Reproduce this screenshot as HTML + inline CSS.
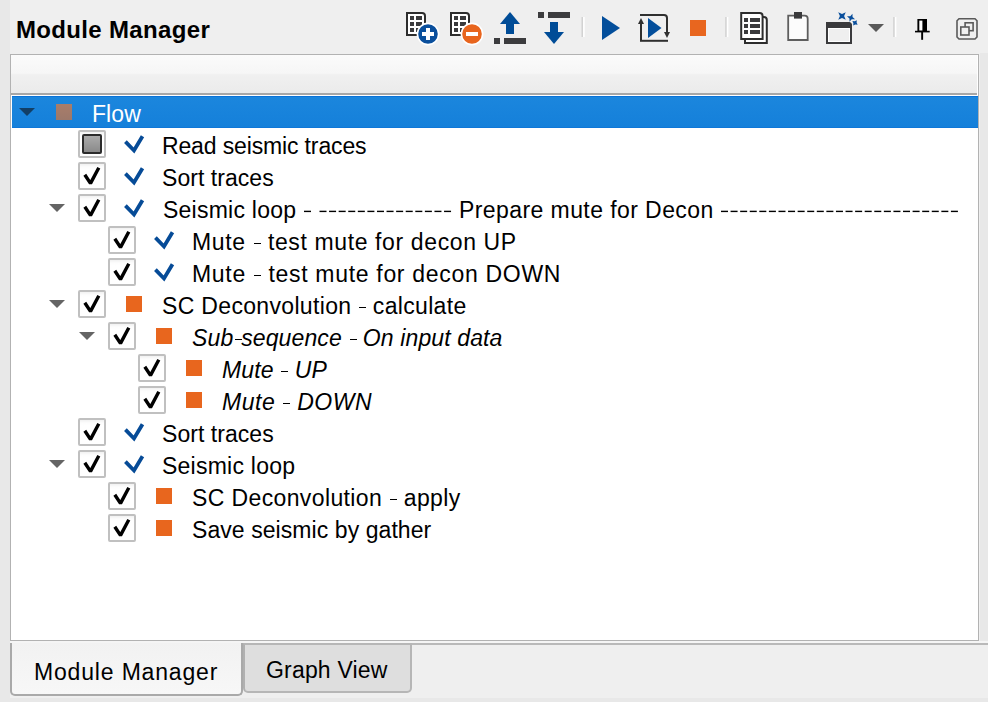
<!DOCTYPE html>
<html><head><meta charset="utf-8">
<style>
html,body{margin:0;padding:0;}
body{width:988px;height:702px;position:relative;overflow:hidden;background:#e8e8e8;font-family:"Liberation Sans",sans-serif;}
.abs{position:absolute;}
#main{position:absolute;left:10px;top:0;width:978px;height:698px;background:#efefef;}
#rstrip{position:absolute;left:980px;top:53px;width:8px;height:588px;background:#e8e8e8;}
#title{position:absolute;left:16px;top:14px;font-size:24px;font-weight:bold;line-height:32px;letter-spacing:0.34px;color:#000;white-space:pre;}
#panel{position:absolute;left:10px;top:54px;width:967px;height:585px;border:1px solid #b2b2b2;background:#fff;}
#hdr{position:absolute;left:11px;top:55px;width:966px;height:38px;background:linear-gradient(#fbfbfb 0,#f6f6f6 48%,#f0f0f0 52%,#ebebeb 100%);border-bottom:2px solid #a7a7a7;}
#sel{position:absolute;left:12px;top:96px;width:966px;height:30px;background:linear-gradient(#1b86dd,#1580da);border-top:1px solid #0b73d8;border-bottom:1px solid #0f77d8;}
.cb{position:absolute;width:24px;height:24px;border:2px solid #c0c0c0;border-radius:2px;background:linear-gradient(#f1f1f1 0,#fdfdfd 3px,#fff 6px);}
.cbp{position:absolute;width:16px;height:16px;border:2px solid #2c2c2c;border-radius:2px;background:linear-gradient(#aaaaaa,#8a8a8a);}
.sq{position:absolute;width:16px;height:16px;background:#e8661e;}
.tx{position:absolute;font-size:23px;line-height:32px;color:#000;white-space:pre;}
.it{font-style:italic;}
.hy{position:relative;color:transparent;}
.hy::after{content:"";position:absolute;left:1.2px;width:7px;height:1.4px;top:14.1px;background:#000;}
.dash{position:absolute;height:2px;background:repeating-linear-gradient(90deg,#000 0,#000 7px,transparent 7px,transparent 9.58px);}
#tabline{position:absolute;left:10px;top:643px;width:978px;height:2px;background:#b9b9b9;}
#tabhl{position:absolute;left:10px;top:641px;width:978px;height:2px;background:#f5f5f5;}
#tab1{position:absolute;left:10px;top:643px;width:229px;height:51px;border:2px solid #a9a9a9;border-top:none;border-radius:0 0 5px 5px;background:linear-gradient(#f2f2f2,#f7f7f7);}
#tab2{position:absolute;left:243px;top:643px;width:165px;height:46px;border:2px solid #b6b6b6;border-left:2px solid #b0b0b0;border-radius:0 0 5px 5px;background:#dedede;}
svg{position:absolute;left:0;top:0;}
</style></head>
<body>
<div id="main"></div>
<div id="rstrip"></div>
<div id="title">Module Manager</div>

<svg width="988" height="54" viewBox="0 0 988 54" style="top:0">
 <!-- add module -->
 <path d="M407 35 V13 H422 Q425 13 425 16 V35 Z" fill="#fff" stroke="#2d2d2d" stroke-width="2"/>
 <g fill="#3a3a3c">
  <rect x="410" y="16" width="4" height="4"/><rect x="416" y="16" width="6" height="4"/>
  <rect x="410" y="22" width="4" height="4"/><rect x="416" y="22" width="6" height="4"/>
  <rect x="410" y="28" width="4" height="4"/><rect x="416" y="28" width="6" height="4"/>
 </g>
 <circle cx="428" cy="34" r="10.6" fill="#0a4f9c" stroke="#fff" stroke-width="1.6"/>
 <rect x="422" y="32" width="12" height="4" fill="#fff"/><rect x="426" y="28" width="4" height="12" fill="#fff"/>
 <!-- remove module -->
 <path d="M451 35 V13 H466 Q469 13 469 16 V35 Z" fill="#fff" stroke="#2d2d2d" stroke-width="2"/>
 <g fill="#3a3a3c">
  <rect x="454" y="16" width="4" height="4"/><rect x="460" y="16" width="6" height="4"/>
  <rect x="454" y="22" width="4" height="4"/><rect x="460" y="22" width="6" height="4"/>
  <rect x="454" y="28" width="4" height="4"/><rect x="460" y="28" width="6" height="4"/>
 </g>
 <circle cx="472" cy="34" r="10.6" fill="#e8651e" stroke="#fff" stroke-width="1.6"/>
 <rect x="466" y="32" width="12" height="4" fill="#fff"/>
 <!-- move up -->
 <polygon points="500,24 520,24 510,12" fill="#004c97"/>
 <rect x="506" y="23" width="8" height="11" fill="#004c97"/>
 <rect x="494" y="38" width="6" height="6" fill="#3c3c3e"/><rect x="504" y="38" width="22" height="6" fill="#3c3c3e"/>
 <!-- move down -->
 <rect x="538" y="12" width="6" height="6" fill="#3c3c3e"/><rect x="548" y="12" width="22" height="6" fill="#3c3c3e"/>
 <rect x="550" y="22" width="8" height="11" fill="#004c97"/>
 <polygon points="544,32 564,32 554,44" fill="#004c97"/>
 <!-- sep -->
 <rect x="581.5" y="17" width="1.6" height="20" fill="#d2d2d2"/><rect x="583.1" y="17" width="1.6" height="20" fill="#fff"/>
 <!-- play -->
 <polygon points="602,16 602,40 620,28" fill="#034e9b"/>
 <!-- loop play -->
 <path d="M640 15 H664 Q667 15 667 18 V34" fill="none" stroke="#2f2f2f" stroke-width="2"/>
 <polygon points="664,32 670,32 667,38" fill="#2f2f2f"/>
 <path d="M641 41 V23" fill="none" stroke="#2f2f2f" stroke-width="2"/>
 <polygon points="638,24 644,24 641,18" fill="#2f2f2f"/>
 <path d="M640 40.8 H668" fill="none" stroke="#2f2f2f" stroke-width="2"/>
 <polygon points="648,18 648,38 661.5,28" fill="#034e9b"/>
 <!-- stop -->
 <rect x="690" y="20" width="16" height="16" fill="#e8661f"/>
 <!-- sep -->
 <rect x="725.2" y="17" width="1.6" height="20" fill="#d2d2d2"/><rect x="726.8" y="17" width="1.6" height="20" fill="#fff"/>
 <!-- docs -->
 <path d="M745 43 V17 H763.8 Q766.8 17 766.8 20 V43 Z" fill="#fff" stroke="#2d2d2d" stroke-width="2"/>
 <path d="M741.2 39 V13 H759.6 Q762.6 13 762.6 16 V39 Z" fill="#fff" stroke="#2d2d2d" stroke-width="2"/>
 <g fill="#3a3a3c">
  <rect x="744" y="18" width="4" height="4"/><rect x="750" y="18" width="10" height="4"/>
  <rect x="744" y="24" width="4" height="4"/><rect x="750" y="24" width="10" height="4"/>
  <rect x="744" y="30" width="4" height="4"/><rect x="750" y="30" width="10" height="4"/>
 </g>
 <!-- clipboard -->
 <path d="M788.2 40 V15.7 H804.7 Q807.7 15.7 807.7 18.7 V40 Z" fill="#fcfcfc" stroke="#5e5e5e" stroke-width="1.8"/>
 <rect x="794" y="12" width="8" height="6.6" fill="#3a3a3c"/>
 <!-- window sparkle -->
 <path d="M827 43 V23 H848 Q851 23 851 26 V43 Z" fill="#efefef" stroke="#3a3a3c" stroke-width="2"/>
 <rect x="828.5" y="28.5" width="21" height="13" fill="none" stroke="#fff" stroke-width="1"/>
 <rect x="826" y="22" width="22" height="6" fill="#3a3a3c"/>
 <path d="M848 22 Q852 22 852 26 V28 H848 Z" fill="#3a3a3c"/>
 <g fill="#0a4f9c">
  <polygon points="845.75,19.75 842.00,18.10 838.25,19.75 839.90,16.00 838.25,12.25 842.00,13.90 845.75,12.25 844.10,16.00"/>
  <polygon points="855.04,19.27 851.72,19.34 849.53,21.84 849.46,18.52 846.96,16.33 850.28,16.26 852.47,13.76 852.54,17.08"/>
  <polygon points="857.62,24.74 855.28,24.48 853.16,25.52 853.42,23.18 852.38,21.06 854.72,21.32 856.84,20.28 856.58,22.62"/>
 </g>
 <polygon points="868,24 884,24 876,32" fill="#595959"/>
 <!-- sep -->
 <rect x="893.2" y="17" width="1.6" height="20" fill="#d2d2d2"/><rect x="894.8" y="17" width="1.6" height="20" fill="#fff"/>
 <!-- pin -->
 <rect x="917.4" y="19" width="9.6" height="12" fill="#000"/>
 <rect x="919.3" y="20.6" width="3.1" height="10" fill="#fff"/>
 <rect x="915" y="30.8" width="14.7" height="1.6" fill="#000"/>
 <rect x="921.2" y="32" width="1.9" height="7.8" fill="#000"/>
 <!-- restore -->
 <path d="M959 18.8 H975 L977 20.8 V37 L975 39 H959 L957 37 V20.8 Z" fill="none" stroke="#5a5a5a" stroke-width="1.6"/>
 <rect x="965.1" y="22.8" width="8" height="7.9" fill="none" stroke="#5a5a5a" stroke-width="1.6"/>
 <rect x="960.8" y="27" width="8.2" height="8" fill="#efefef" stroke="#5a5a5a" stroke-width="1.6"/>
</svg>

<div id="panel"></div>
<div id="hdr"></div>
<div id="sel"></div>
<div class="sq" style="left:56px;top:104px;background:linear-gradient(#a97d6a,#9c786a)"></div>
<div class="tx" style="left:92px;top:98px;letter-spacing:0.07px;color:#fff;">Flow</div>
<div class="cb" style="left:78px;top:130px"></div>
<div class="cbp" style="left:82px;top:134px"></div>
<div class="tx" style="left:162px;top:130px;letter-spacing:-0.14px;">Read seismic traces</div>
<div class="cb" style="left:78px;top:162px"></div>
<div class="tx" style="left:162px;top:162px;letter-spacing:0.05px;">Sort traces</div>
<div class="cb" style="left:78px;top:194px"></div>
<div class="tx" style="left:163px;top:194px;letter-spacing:0.24px">Seismic loop</div>
<div class="tx" style="left:459px;top:194px;letter-spacing:0.42px">Prepare mute for Decon</div>
<div class="cb" style="left:108px;top:226px"></div>
<div class="tx" style="left:192px;top:226px;letter-spacing:0.62px;">Mute <span class="hy">-</span> test mute for decon UP</div>
<div class="cb" style="left:108px;top:258px"></div>
<div class="tx" style="left:192px;top:258px;letter-spacing:0.69px;">Mute <span class="hy">-</span> test mute for decon DOWN</div>
<div class="cb" style="left:78px;top:290px"></div>
<div class="sq" style="left:126px;top:296px"></div>
<div class="tx" style="left:162px;top:290px;letter-spacing:0.33px;">SC Deconvolution <span class="hy">-</span> calculate</div>
<div class="cb" style="left:108px;top:322px"></div>
<div class="sq" style="left:156px;top:328px"></div>
<div class="tx it" style="left:192px;top:322px;letter-spacing:0.13px;">Sub<span class="hy">-</span>sequence <span class="hy">-</span> On input data</div>
<div class="cb" style="left:138px;top:354px"></div>
<div class="sq" style="left:186px;top:360px"></div>
<div class="tx it" style="left:222px;top:354px;letter-spacing:0.15px;">Mute <span class="hy">-</span> UP</div>
<div class="cb" style="left:138px;top:386px"></div>
<div class="sq" style="left:186px;top:392px"></div>
<div class="tx it" style="left:222px;top:386px;letter-spacing:0.52px;">Mute <span class="hy">-</span> DOWN</div>
<div class="cb" style="left:78px;top:418px"></div>
<div class="tx" style="left:162px;top:418px;letter-spacing:0.05px;">Sort traces</div>
<div class="cb" style="left:78px;top:450px"></div>
<div class="tx" style="left:162px;top:450px;letter-spacing:0.24px;">Seismic loop</div>
<div class="cb" style="left:108px;top:482px"></div>
<div class="sq" style="left:156px;top:488px"></div>
<div class="tx" style="left:192px;top:482px;letter-spacing:0.38px;">SC Deconvolution <span class="hy">-</span> apply</div>
<div class="cb" style="left:108px;top:514px"></div>
<div class="sq" style="left:156px;top:520px"></div>
<div class="tx" style="left:192px;top:514px;letter-spacing:0.07px;">Save seismic by gather</div>
<svg width="988" height="702" viewBox="0 0 988 702">
<polygon points="19,108 35,108 27,116" fill="#123f66"/>
<polyline points="125.4,141.7 134,150.5 142.5,136.2" fill="none" stroke="#064b97" stroke-width="3.8" stroke-linejoin="miter" stroke-miterlimit="10"/>
<polyline points="84.8,174.7 90.5,183.4 98.8,167.7" fill="none" stroke="#000" stroke-width="3.4" stroke-linejoin="bevel"/>
<polyline points="125.4,173.7 134,182.5 142.5,168.2" fill="none" stroke="#064b97" stroke-width="3.8" stroke-linejoin="miter" stroke-miterlimit="10"/>
<polygon points="49,204 65,204 57,212" fill="#646464"/>
<polyline points="84.8,206.7 90.5,215.4 98.8,199.7" fill="none" stroke="#000" stroke-width="3.4" stroke-linejoin="bevel"/>
<polyline points="125.4,205.7 134,214.5 142.5,200.2" fill="none" stroke="#064b97" stroke-width="3.8" stroke-linejoin="miter" stroke-miterlimit="10"/>
<rect x="304" y="210.7" width="7" height="1.4" fill="#000"/>
<rect x="319.50" y="210.7" width="7" height="1.4" fill="#000"/>
<rect x="329.08" y="210.7" width="7" height="1.4" fill="#000"/>
<rect x="338.66" y="210.7" width="7" height="1.4" fill="#000"/>
<rect x="348.24" y="210.7" width="7" height="1.4" fill="#000"/>
<rect x="357.82" y="210.7" width="7" height="1.4" fill="#000"/>
<rect x="367.40" y="210.7" width="7" height="1.4" fill="#000"/>
<rect x="376.98" y="210.7" width="7" height="1.4" fill="#000"/>
<rect x="386.56" y="210.7" width="7" height="1.4" fill="#000"/>
<rect x="396.14" y="210.7" width="7" height="1.4" fill="#000"/>
<rect x="405.72" y="210.7" width="7" height="1.4" fill="#000"/>
<rect x="415.30" y="210.7" width="7" height="1.4" fill="#000"/>
<rect x="424.88" y="210.7" width="7" height="1.4" fill="#000"/>
<rect x="434.46" y="210.7" width="7" height="1.4" fill="#000"/>
<rect x="444.04" y="210.7" width="7" height="1.4" fill="#000"/>
<rect x="721.00" y="210.7" width="7" height="1.4" fill="#000"/>
<rect x="730.58" y="210.7" width="7" height="1.4" fill="#000"/>
<rect x="740.16" y="210.7" width="7" height="1.4" fill="#000"/>
<rect x="749.74" y="210.7" width="7" height="1.4" fill="#000"/>
<rect x="759.32" y="210.7" width="7" height="1.4" fill="#000"/>
<rect x="768.90" y="210.7" width="7" height="1.4" fill="#000"/>
<rect x="778.48" y="210.7" width="7" height="1.4" fill="#000"/>
<rect x="788.06" y="210.7" width="7" height="1.4" fill="#000"/>
<rect x="797.64" y="210.7" width="7" height="1.4" fill="#000"/>
<rect x="807.22" y="210.7" width="7" height="1.4" fill="#000"/>
<rect x="816.80" y="210.7" width="7" height="1.4" fill="#000"/>
<rect x="826.38" y="210.7" width="7" height="1.4" fill="#000"/>
<rect x="835.96" y="210.7" width="7" height="1.4" fill="#000"/>
<rect x="845.54" y="210.7" width="7" height="1.4" fill="#000"/>
<rect x="855.12" y="210.7" width="7" height="1.4" fill="#000"/>
<rect x="864.70" y="210.7" width="7" height="1.4" fill="#000"/>
<rect x="874.28" y="210.7" width="7" height="1.4" fill="#000"/>
<rect x="883.86" y="210.7" width="7" height="1.4" fill="#000"/>
<rect x="893.44" y="210.7" width="7" height="1.4" fill="#000"/>
<rect x="903.02" y="210.7" width="7" height="1.4" fill="#000"/>
<rect x="912.60" y="210.7" width="7" height="1.4" fill="#000"/>
<rect x="922.18" y="210.7" width="7" height="1.4" fill="#000"/>
<rect x="931.76" y="210.7" width="7" height="1.4" fill="#000"/>
<rect x="941.34" y="210.7" width="7" height="1.4" fill="#000"/>
<rect x="950.92" y="210.7" width="7" height="1.4" fill="#000"/>
<polyline points="114.8,238.7 120.5,247.4 128.8,231.7" fill="none" stroke="#000" stroke-width="3.4" stroke-linejoin="bevel"/>
<polyline points="155.4,237.7 164,246.5 172.5,232.2" fill="none" stroke="#064b97" stroke-width="3.8" stroke-linejoin="miter" stroke-miterlimit="10"/>
<polyline points="114.8,270.7 120.5,279.4 128.8,263.7" fill="none" stroke="#000" stroke-width="3.4" stroke-linejoin="bevel"/>
<polyline points="155.4,269.7 164,278.5 172.5,264.2" fill="none" stroke="#064b97" stroke-width="3.8" stroke-linejoin="miter" stroke-miterlimit="10"/>
<polygon points="49,300 65,300 57,308" fill="#646464"/>
<polyline points="84.8,302.7 90.5,311.4 98.8,295.7" fill="none" stroke="#000" stroke-width="3.4" stroke-linejoin="bevel"/>
<polygon points="79,332 95,332 87,340" fill="#646464"/>
<polyline points="114.8,334.7 120.5,343.4 128.8,327.7" fill="none" stroke="#000" stroke-width="3.4" stroke-linejoin="bevel"/>
<polyline points="144.8,366.7 150.5,375.4 158.8,359.7" fill="none" stroke="#000" stroke-width="3.4" stroke-linejoin="bevel"/>
<polyline points="144.8,398.7 150.5,407.4 158.8,391.7" fill="none" stroke="#000" stroke-width="3.4" stroke-linejoin="bevel"/>
<polyline points="84.8,430.7 90.5,439.4 98.8,423.7" fill="none" stroke="#000" stroke-width="3.4" stroke-linejoin="bevel"/>
<polyline points="125.4,429.7 134,438.5 142.5,424.2" fill="none" stroke="#064b97" stroke-width="3.8" stroke-linejoin="miter" stroke-miterlimit="10"/>
<polygon points="49,460 65,460 57,468" fill="#646464"/>
<polyline points="84.8,462.7 90.5,471.4 98.8,455.7" fill="none" stroke="#000" stroke-width="3.4" stroke-linejoin="bevel"/>
<polyline points="125.4,461.7 134,470.5 142.5,456.2" fill="none" stroke="#064b97" stroke-width="3.8" stroke-linejoin="miter" stroke-miterlimit="10"/>
<polyline points="114.8,494.7 120.5,503.4 128.8,487.7" fill="none" stroke="#000" stroke-width="3.4" stroke-linejoin="bevel"/>
<polyline points="114.8,526.7 120.5,535.4 128.8,519.7" fill="none" stroke="#000" stroke-width="3.4" stroke-linejoin="bevel"/>
</svg>

<div id="tabhl"></div>
<div id="tabline"></div>
<div id="tab2"></div>
<div id="tab1"></div>
<div class="tx" style="left:34px;top:661px;line-height:23px;letter-spacing:0.83px">Module Manager</div>
<div class="tx" style="left:266px;top:659px;line-height:23px;letter-spacing:0.18px">Graph View</div>
</body></html>
